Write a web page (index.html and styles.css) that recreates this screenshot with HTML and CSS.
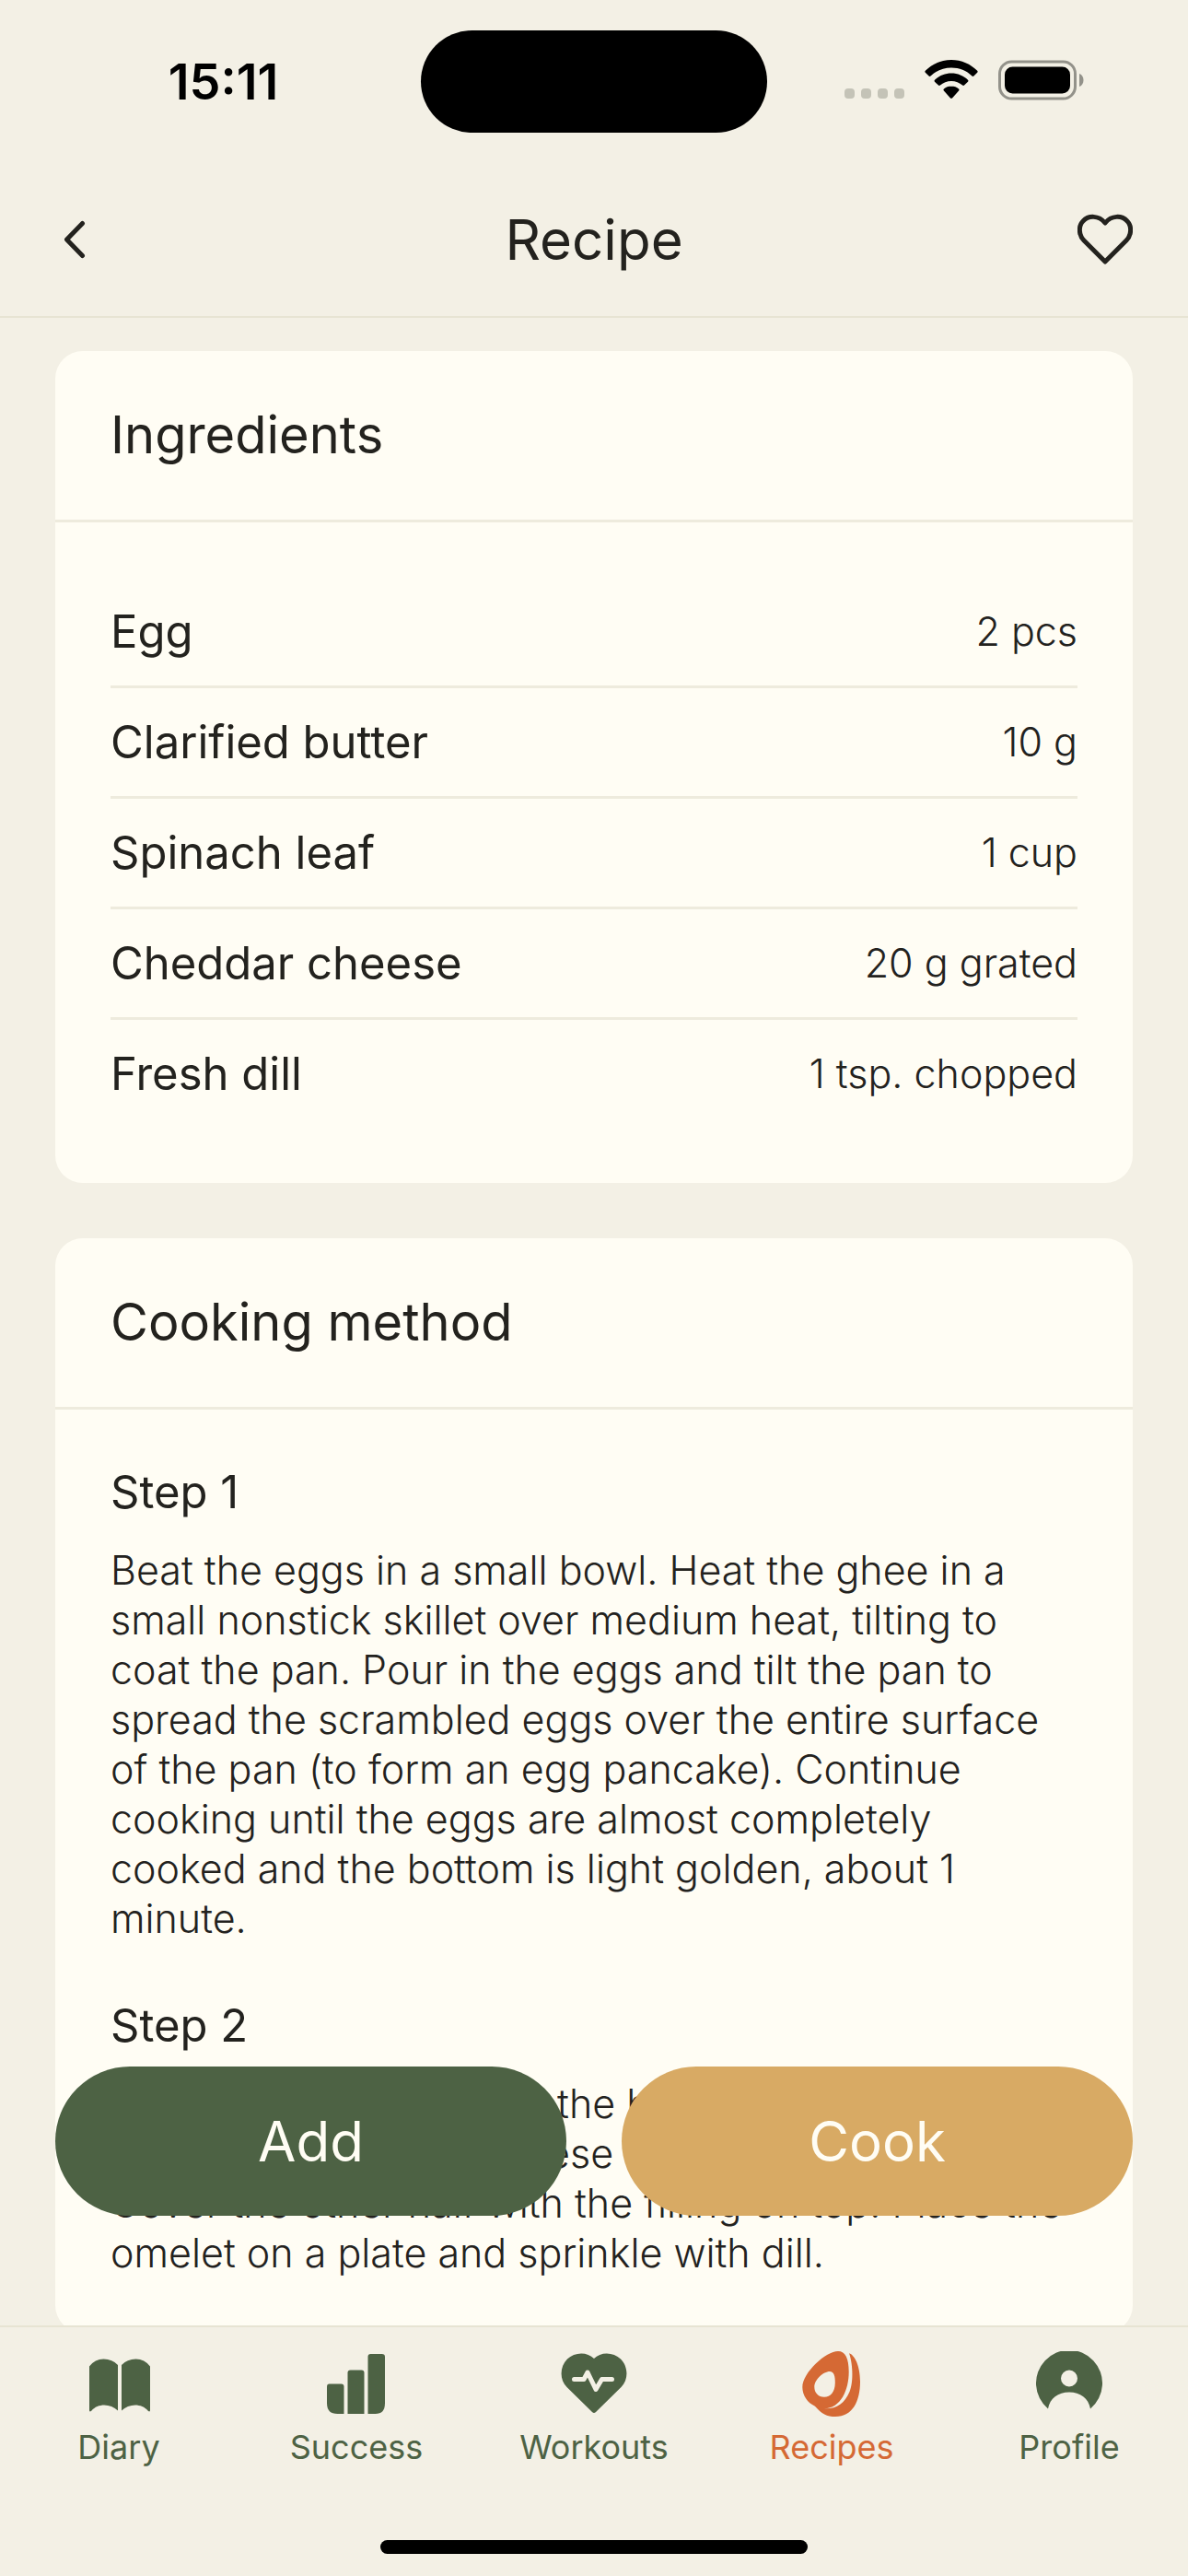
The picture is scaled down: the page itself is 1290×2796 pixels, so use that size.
FILE: index.html
```html
<!DOCTYPE html>
<html lang="en">
<head>
    <meta charset="UTF-8">
    <meta name="viewport" content="width=device-width, initial-scale=1.0">
    <title>Recipe</title>
    <link rel="stylesheet" href="styles.css">
</head>
<body>
    <div class="screen">
        <div class="status-bar">
            <div class="time">15:11</div>
            <div class="island"></div>
            <div class="status-icons">
                <svg width="65" height="42" viewBox="0 0 65 42" fill="#c4c3b7">
                    <rect x="0" y="31" width="11" height="11" rx="4"/>
                    <rect x="18" y="31" width="11" height="11" rx="4"/>
                    <rect x="36" y="31" width="11" height="11" rx="4"/>
                    <rect x="54" y="31" width="11" height="11" rx="4"/>
                </svg>
                <svg width="58" height="42" viewBox="0 0 58 42">
                    <path d="M29 0C18 0 8 4.500 .8 11.800c-.6.600-.6 1.400 0 2l3.800 3.700c.5.500 1.300.500 1.900 0C12.500 11.600 20.300 8.500 29 8.500s16.500 3.100 22.500 9c.6.500 1.400.500 1.900 0l3.800-3.700c.6-.6.600-1.400 0-2C50 4.500 40 0 29 0Z"/>
                    <path d="M29 14.500c-7 0-13.300 2.700-18 7.200-.6.600-.6 1.400 0 2l4 3.900c.5.500 1.300.500 1.900 0 3.200-3 7.500-4.700 12.100-4.700s8.900 1.700 12.100 4.700c.6.500 1.400.500 1.900 0l4-3.900c.6-.6.600-1.400 0-2-4.700-4.500-11-7.200-18-7.200Z"/>
                    <path d="M29 28.500c-3.200 0-6 1.200-8.100 3.100-.6.500-.6 1.300 0 1.900l7.100 7.900c.6.600 1.400.600 2 0l7.100-7.900c.6-.6.600-1.400 0-1.900-2.100-1.900-4.900-3.100-8.100-3.100Z"/>
                </svg>
                <svg width="94" height="44" viewBox="0 0 94 44">
                    <rect x="1.500" y="2" width="82" height="40" rx="13" fill="none" stroke="#93928a" stroke-width="3"/>
                    <rect x="7" y="7.500" width="71" height="29" rx="8.500"/>
                    <path d="M88 15c6 2 6 12 0 14Z" fill="#93928a"/>
                </svg>
            </div>
        </div>
        <header class="header">
            <button class="icon-button" aria-label="Back">
                <svg width="60" height="60" viewBox="0 0 60 60">
                    <path d="M29.500 12.500 12.500 30l17 17.500"/>
                </svg>
            </button>
            <h1>Recipe</h1>
            <button class="icon-button" aria-label="Add to favourites">
                <svg width="60" height="60" viewBox="0 0 60 60">
                    <path d="M30 54 7 31C1 25 1 15 6 10 12 3.500 23 3.500 30 12 37 3.500 48 3.500 54 10c5 5 5 15-1 21Z"/>
                </svg>
            </button>
        </header>

        <div class="content">
            <main class="scroll">
                <section class="card">
                    <h2>Ingredients</h2>
                    <ul class="ingredients">
                        <li><span>Egg</span><span class="amount">2 pcs</span></li>
                        <li><span>Clarified butter</span><span class="amount">10 g</span></li>
                        <li><span>Spinach leaf</span><span class="amount">1 cup</span></li>
                        <li><span>Cheddar cheese</span><span class="amount">20 g grated</span></li>
                        <li><span>Fresh dill</span><span class="amount">1 tsp. chopped</span></li>
                    </ul>
                </section>
                <section class="card">
                    <h2>Cooking method</h2>
                    <div class="steps">
                        <div class="step">
                            <h3>Step 1</h3>
                            <p>Beat the eggs in a small bowl. Heat the ghee in a<br>
                            small nonstick skillet over medium heat, tilting to<br>
                            coat the pan. Pour in the eggs and tilt the pan to<br>
                            spread the scrambled eggs over the entire surface<br>
                            of the pan (to form an egg pancake). Continue<br>
                            cooking until the eggs are almost completely<br>
                            cooked and the bottom is light golden, about 1<br>
                            minute.</p>
                        </div>
                        <div class="step">
                            <h3>Step 2</h3>
                            <p>Add the spinach leaf on the bottom half of the egg,<br>
                            then sprinkle it with cheese to make the filling.<br>
                            Cover the other half with the filling on top. Place the<br>
                            omelet on a plate and sprinkle with dill.</p>
                        </div>
                    </div>
                </section>
            </main>
            <div class="actions">
                <button class="btn add">Add</button>
                <button class="btn cook">Cook</button>
            </div>
        </div>

        <nav class="tabs">
            <a href="#diary">
                <svg width="72" height="72" viewBox="0 0 72 72">
                    <path d="M4 16.500Q10 8.500 19.500 8.500T35 15V64.500C27 56.500 13 56.500 6.500 64.500Q4 66.500 4 64Z"/>
                    <path d="M70 16.500Q64 8.500 54.500 8.500T39 15V64.500C47 56.500 61 56.500 67.500 64.500Q70 66.500 70 64Z"/>
                </svg>
                <span>Diary</span>
            </a>
            <a href="#success">
                <svg width="72" height="72" viewBox="0 0 72 72">
                    <path d="M6.500 35.500h13q3 0 3 3V68h-7Q4 68 4 56.500V38.500q0-3 2.500-3Z"/>
                    <path d="M29.500 20.500h12q3 0 3 3V68h-18V23.500q0-3 3-3Z"/>
                    <path d="M51.500 3h12q3.500 0 3.500 3v50.500Q67 68 56.500 68h-8V6q0-3 3-3Z"/>
                </svg>
                <span>Success</span>
            </a>
            <a href="#workouts">
                <svg width="72" height="72" viewBox="0 0 72 72">
                    <path d="M36 8C29 .5 15 .5 7 8.500-1.500 17-1.500 31 6.500 39L34 66q2 1.800 4 0L65.500 39c8-8 8-22-.5-30.500C57 .5 43 .5 36 8Z"/>
                    <path class="pulse" d="M14.500 30.500h10.500l4-7.500 9 18.500 6.500-11h11"/>
                </svg>
                <span>Workouts</span>
            </a>
            <a href="#recipes" class="active">
                <svg width="72" height="72" viewBox="0 0 72 72">
                    <path fill-rule="evenodd" d="M43 0C30 0 4.500 23 4.300 39c0 9 5.500 17 13.700 20.700C25 68 31 71 40 71c19 0 27-17 27-38C67 16 61 4 55 2.300c3.500 9 5.500 30 .5 41.700C50 57 41 63 28 62.300c18-.3 26.700-20 26.700-40C54.700 8 51 0 43 0ZM34 22c4.500 0 6 5 5.800 12.500C39.600 44 35 49.700 28 49.700c-6.500 0-10.700-4.700-10.700-11C17.300 31 27 22 34 22Z"/>
                </svg>
                <span>Recipes</span>
            </a>
            <a href="#profile">
                <svg width="72" height="72" viewBox="0 0 72 72">
                    <path fill-rule="evenodd" d="M13 62.500A36 36 0 1 1 59 62.500C57 51 48 44.500 36 44.500S15 51 13 62.500ZM45 29.500a9 9 0 1 0-18 0 9 9 0 1 0 18 0Z"/>
                </svg>
                <span>Profile</span>
            </a>
        </nav>
        <div class="home-bar"></div>
    </div>
</body>
</html>
```
FILE: styles.css
```css
* {
    box-sizing: border-box;
}
body {
    margin: 0;
    background: #f3f0e5;
    color: #23221e;
    font-family: Inter, "Liberation Sans", sans-serif;
}
button {
    border: none;
    background: none;
    padding: 0;
    font-family: inherit;
    cursor: pointer;
}
h1, h2, h3, p, ul {
    margin: 0;
    padding: 0;
}
svg {
    display: block;
}
.screen {
    display: flex;
    flex-direction: column;
    height: 100vh;
}

/* status bar */
.status-bar {
    display: grid;
    grid-template-columns: 1fr 376px 1fr;
    align-items: center;
    height: 177px;
    color: #000;
}
.time {
    padding-left: 28px;
    text-align: center;
    font-size: 54px;
    font-weight: 600;
}
.island {
    height: 111px;
    border-radius: 56px;
    background: #000;
}
.status-icons {
    display: flex;
    justify-content: center;
    gap: 22px;
    padding: 0 28px 4px 0;
}

/* header */
.header {
    display: flex;
    justify-content: space-between;
    align-items: center;
    height: 168px;
    padding: 0 60px;
    border-bottom: 2px solid #e7e4d3;
}
.header h1 {
    font-size: 60px;
    font-weight: 400;
}
.icon-button svg {
    fill: none;
    stroke: #23221e;
    stroke-width: 5;
    stroke-linecap: round;
    stroke-linejoin: round;
}

/* cards */
.content {
    position: relative;
    flex: 1;
    min-height: 0;
}
.scroll {
    display: flex;
    flex-direction: column;
    gap: 60px;
    height: 100%;
    padding: 36px 60px 0;
    overflow-y: auto;
    scrollbar-width: none;
}
.card {
    flex-shrink: 0;
    border-radius: 30px;
    background: #fffdf4;
}
.card h2 {
    padding: 60px;
    border-bottom: 3px solid #eeebdd;
    font-size: 56px;
    font-weight: 400;
    line-height: 63px;
}
.ingredients {
    padding: 60px;
    list-style: none;
}
.ingredients li {
    display: flex;
    justify-content: space-between;
    align-items: center;
    padding: 28px 0;
    border-bottom: 3px solid #eeebdd;
    font-size: 49px;
    line-height: 61px;
}
.ingredients li:last-child {
    border-bottom: none;
}
.amount {
    font-size: 43px;
    font-weight: 300;
}
.steps {
    display: flex;
    flex-direction: column;
    gap: 60px;
    padding: 60px;
}
.step h3 {
    margin-bottom: 27px;
    font-size: 49px;
    font-weight: 400;
    line-height: 60px;
}
.step p {
    font-size: 43px;
    font-weight: 300;
    line-height: 54px;
    white-space: nowrap;
}

/* buttons over the recipe */
.actions {
    position: absolute;
    left: 60px;
    right: 60px;
    bottom: 119px;
    display: flex;
    gap: 60px;
}
.btn {
    flex: 1;
    height: 162px;
    border-radius: 81px;
    color: #fffdf4;
    font-size: 60px;
}
.add {
    background: #4d6244;
}
.cook {
    background: #d8aa64;
}

/* bottom tabs */
.tabs {
    display: flex;
    padding: 26px 0 77px;
    border-top: 2px solid #e7e4d3;
}
.tabs a {
    flex: 1;
    display: flex;
    flex-direction: column;
    align-items: center;
    gap: 8px;
    color: #4d6244;
    font-size: 36px;
    line-height: 48px;
    text-decoration: none;
}
.tabs svg {
    fill: currentColor;
}
.tabs .active {
    color: #d56934;
}
.tabs .pulse {
    fill: none;
    stroke: #f3f0e5;
    stroke-width: 5;
    stroke-linecap: round;
    stroke-linejoin: round;
}
.home-bar {
    align-self: center;
    width: 36%;
    height: 15px;
    margin-bottom: 24px;
    border-radius: 8px;
    background: #000;
}
```
